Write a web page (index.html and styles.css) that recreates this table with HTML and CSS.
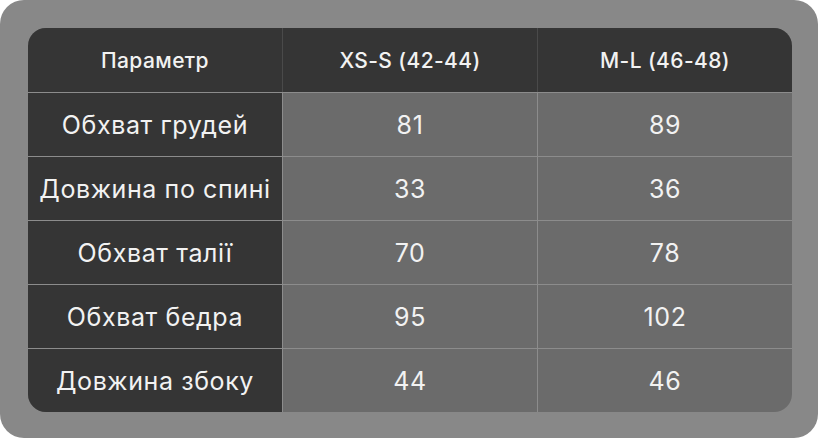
FILE: index.html
```html
<!DOCTYPE html>
<html lang="uk">
<head>
<meta charset="utf-8">
<title>Розмірна сітка</title>
<link rel="stylesheet" href="styles.css">
</head>
<body>
<div class="frame">
  <div class="table">
    <div class="row head">
      <div class="cell">Параметр</div>
      <div class="cell">XS-S (42-44)</div>
      <div class="cell">M-L (46-48)</div>
    </div>
    <div class="row">
      <div class="cell label">Обхват грудей</div>
      <div class="cell">81</div>
      <div class="cell">89</div>
    </div>
    <div class="row">
      <div class="cell label">Довжина по спині</div>
      <div class="cell">33</div>
      <div class="cell">36</div>
    </div>
    <div class="row">
      <div class="cell label">Обхват талії</div>
      <div class="cell">70</div>
      <div class="cell">78</div>
    </div>
    <div class="row">
      <div class="cell label">Обхват бедра</div>
      <div class="cell">95</div>
      <div class="cell">102</div>
    </div>
    <div class="row">
      <div class="cell label">Довжина збоку</div>
      <div class="cell">44</div>
      <div class="cell">46</div>
    </div>
  </div>
</div>
</body>
</html>
```

FILE: styles.css
```css
html, body {
  margin: 0;
  padding: 0;
  background: #ffffff;
}
body {
  width: 820px;
  height: 440px;
  font-family: Inter, "DejaVu Sans", sans-serif;
}
.frame {
  width: 818px;
  height: 438px;
  background: #888888;
  border-radius: 24px;
  padding: 28px 26px 26px 28px;
  box-sizing: border-box;
}
.table {
  width: 764px;
  height: 384px;
  border-radius: 18px;
  overflow: hidden;
  background: #6b6b6b;
  display: flex;
  flex-direction: column;
}
.row {
  display: grid;
  grid-template-columns: 254px 255px 255px;
  height: 64px;
}
.row + .row .cell {
  border-top: 1px solid #8c8c8c;
}
.cell {
  display: flex;
  align-items: center;
  justify-content: center;
  color: #f2f2f2;
  font-size: 25px;
  font-weight: 400;
  letter-spacing: 0.6px;
  box-sizing: border-box;
}
.cell + .cell {
  border-left: 1px solid #8c8c8c;
}
.head .cell {
  background: #353535;
  font-size: 21px;
  font-weight: 500;
  letter-spacing: 0.4px;
}
.head .cell + .cell {
  border-left-color: #4a4a4a;
}
.label {
  background: #353535;
}
```
